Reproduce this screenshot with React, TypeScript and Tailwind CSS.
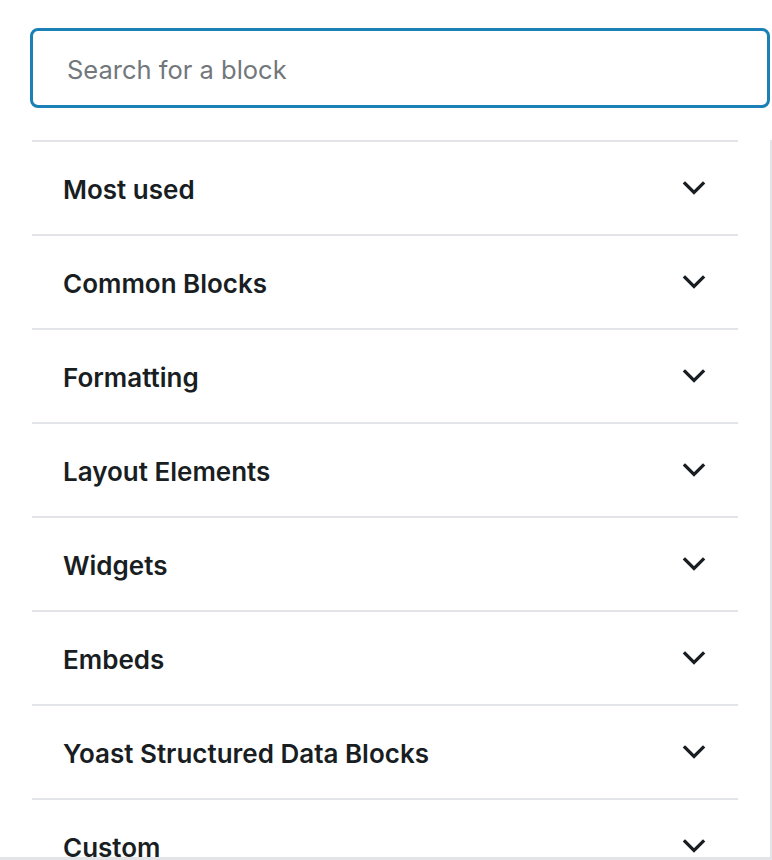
import React from "react";

const categories = [
  "Most used",
  "Common Blocks",
  "Formatting",
  "Layout Elements",
  "Widgets",
  "Embeds",
  "Yoast Structured Data Blocks",
  "Custom",
];

const Chevron = () => (
  <svg width="24" height="16" viewBox="0 0 24 16" fill="none">
    <polyline
      points="3,3.5 12,12.5 21,3.5"
      stroke="#191e23"
      strokeWidth="3.2"
      strokeLinecap="square"
      strokeLinejoin="miter"
    />
  </svg>
);

export default function App() {
  return (
    <div
      className="w-[772px] h-[860px] bg-white overflow-hidden flex flex-col"
      style={{ fontFamily: "Inter, 'Noto Sans', sans-serif" }}
    >
      {/* Search */}
      <div className="pt-[28px] pl-[30px] pb-[32px]">
        <input
          type="text"
          placeholder="Search for a block"
          className="w-[740px] h-[80px] rounded-[8px] border-[3px] border-[#1a80b6] pl-[34px] pt-[2px] text-[25.5px] text-[#191e23] placeholder:text-[#72777c] outline-none"
        />
      </div>

      {/* Panel */}
      <div className="flex-1 min-h-0 border-r-2 border-b-[3px] border-[#e2e4e7] overflow-hidden">
        <div className="ml-[32px] w-[706px]">
          {categories.map((name) => (
            <div
              key={name}
              className="h-[94px] border-t-2 border-[#e2e4e7] flex items-center justify-between pl-[31px] pr-[32px]"
            >
              <span className="text-[26px] font-semibold text-[#191e23] pt-[2px]">
                {name}
              </span>
              <Chevron />
            </div>
          ))}
        </div>
      </div>
    </div>
  );
}
